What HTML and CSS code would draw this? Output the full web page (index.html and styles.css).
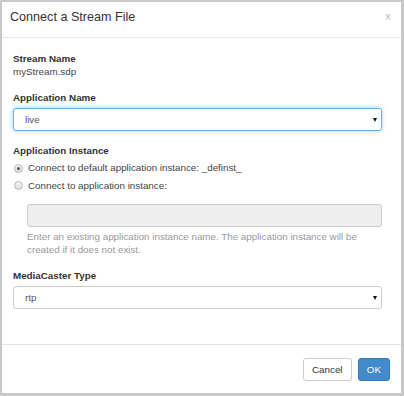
FILE: index.html
```html
<!DOCTYPE html>
<html lang="en">
<head>
    <meta charset="UTF-8">
    <meta name="viewport" content="width=device-width, initial-scale=1.0">
    <title>Connect a Stream File</title>
    <link rel="stylesheet" href="styles.css">
</head>
<body>
    <div class="modal">
        <div class="modal-header">
            <h4 class="modal-title">Connect a Stream File</h4>
            <span class="close">x</span>
        </div>

        <div class="modal-body">
            <div class="group">
                <label class="label">Stream Name</label>
                <p class="value">myStream.sdp</p>
            </div>

            <div class="group">
                <label class="label">Application Name</label>
                <!-- fake select so the arrow looks the same everywhere -->
                <div class="select focus">
                    <span>live</span>
                    <span class="caret"></span>
                </div>
            </div>

            <div class="group">
                <label class="label tight">Application Instance</label>
                <div class="radio-row">
                    <span class="radio checked"></span>
                    <span>Connect to default application instance: _definst_</span>
                </div>
                <div class="radio-row">
                    <span class="radio"></span>
                    <span>Connect to application instance:</span>
                </div>
                <div class="indent">
                    <div class="input disabled"></div>
                    <p class="help">Enter an existing application instance name. The application instance will be<br>created if it does not exist.</p>
                </div>
            </div>

            <div class="group">
                <label class="label">MediaCaster Type</label>
                <div class="select">
                    <span>rtp</span>
                    <span class="caret"></span>
                </div>
            </div>
        </div>

        <div class="modal-footer">
            <button class="btn">Cancel</button>
            <button class="btn btn-primary">OK</button>
        </div>
    </div>
</body>
</html>
```

FILE: styles.css
```css
* {
    margin: 0;
    padding: 0;
    box-sizing: border-box;
}
html, body {
    height: 100%;
}
body {
    font-family: "Liberation Sans", Arial, sans-serif;
    font-size: 9.8px;
    line-height: 13px;
    color: #333;
    background-color: #c8c8c8;
    padding: 2px 3px 3px 2px;
}
.modal {
    background-color: #fff;
    height: 100%;
    display: flex;
    flex-direction: column;
}
.modal-header {
    display: flex;
    padding: 6px 10px 11px 8px;
    border-bottom: 1px solid #e5e5e5;
}
.modal-title {
    font-size: 12.6px;
    font-weight: normal;
    line-height: 18px;
    color: #333;
}
.close {
    margin-left: auto;
    margin-top: 2px;
    font-size: 11.5px;
    line-height: 12px;
    color: #bdbdbd;
}
.modal-body {
    flex: 1;
    padding: 14px 19px 0 11px;
}
.group {
    margin-bottom: 13px;
}
.label {
    display: block;
    font-weight: bold;
    margin-bottom: 4px;
}
.label.tight {
    margin-bottom: 2px;
}
.value {
    margin-top: -4px;
    color: #444;
}
.select, .input {
    height: 23px;
    border: 1px solid #ccc;
    border-radius: 3px;
}
.select {
    display: flex;
    align-items: center;
    justify-content: space-between;
    padding: 0 4px 0 11px;
    color: #555;
}
.select.focus {
    border-color: #66afe9;
    box-shadow: 0 0 4px rgba(102, 175, 233, 0.6);
}
.caret {
    width: 0;
    height: 0;
    border-left: 2.5px solid transparent;
    border-right: 2.5px solid transparent;
    border-top: 4px solid #111;
    margin-top: 1px;
}
.radio-row {
    display: flex;
    align-items: center;
    height: 17.5px;
    line-height: 17px;
    color: #444;
}
.radio {
    width: 9px;
    height: 9px;
    border-radius: 50%;
    border: 1px solid #b5b5b5;
    background: linear-gradient(#f4f4f4, #dcdcdc);
    margin: 1px 5px 0 1px;
    display: flex;
    align-items: center;
    justify-content: center;
}
.radio.checked::after {
    content: "";
    width: 3px;
    height: 3px;
    border-radius: 50%;
    background-color: #555;
}
.indent {
    padding-left: 14px;
    margin-top: 10px;
}
.input.disabled {
    background-color: #eee;
}
.help {
    margin-top: 4px;
    color: #999;
    line-height: 12.5px;
}
.modal-footer {
    display: flex;
    justify-content: flex-end;
    gap: 6px;
    padding: 13px 11px 12px;
    border-top: 1px solid #e5e5e5;
}
.btn {
    height: 23px;
    padding: 0 8.3px;
    font-family: inherit;
    font-size: 9.8px;
    color: #333;
    background-color: #fff;
    border: 1px solid #ccc;
    border-radius: 3px;
}
.btn-primary {
    padding: 0 8px;
    color: #fff;
    background-color: #428bca;
    border-color: #357ebd;
}
```
